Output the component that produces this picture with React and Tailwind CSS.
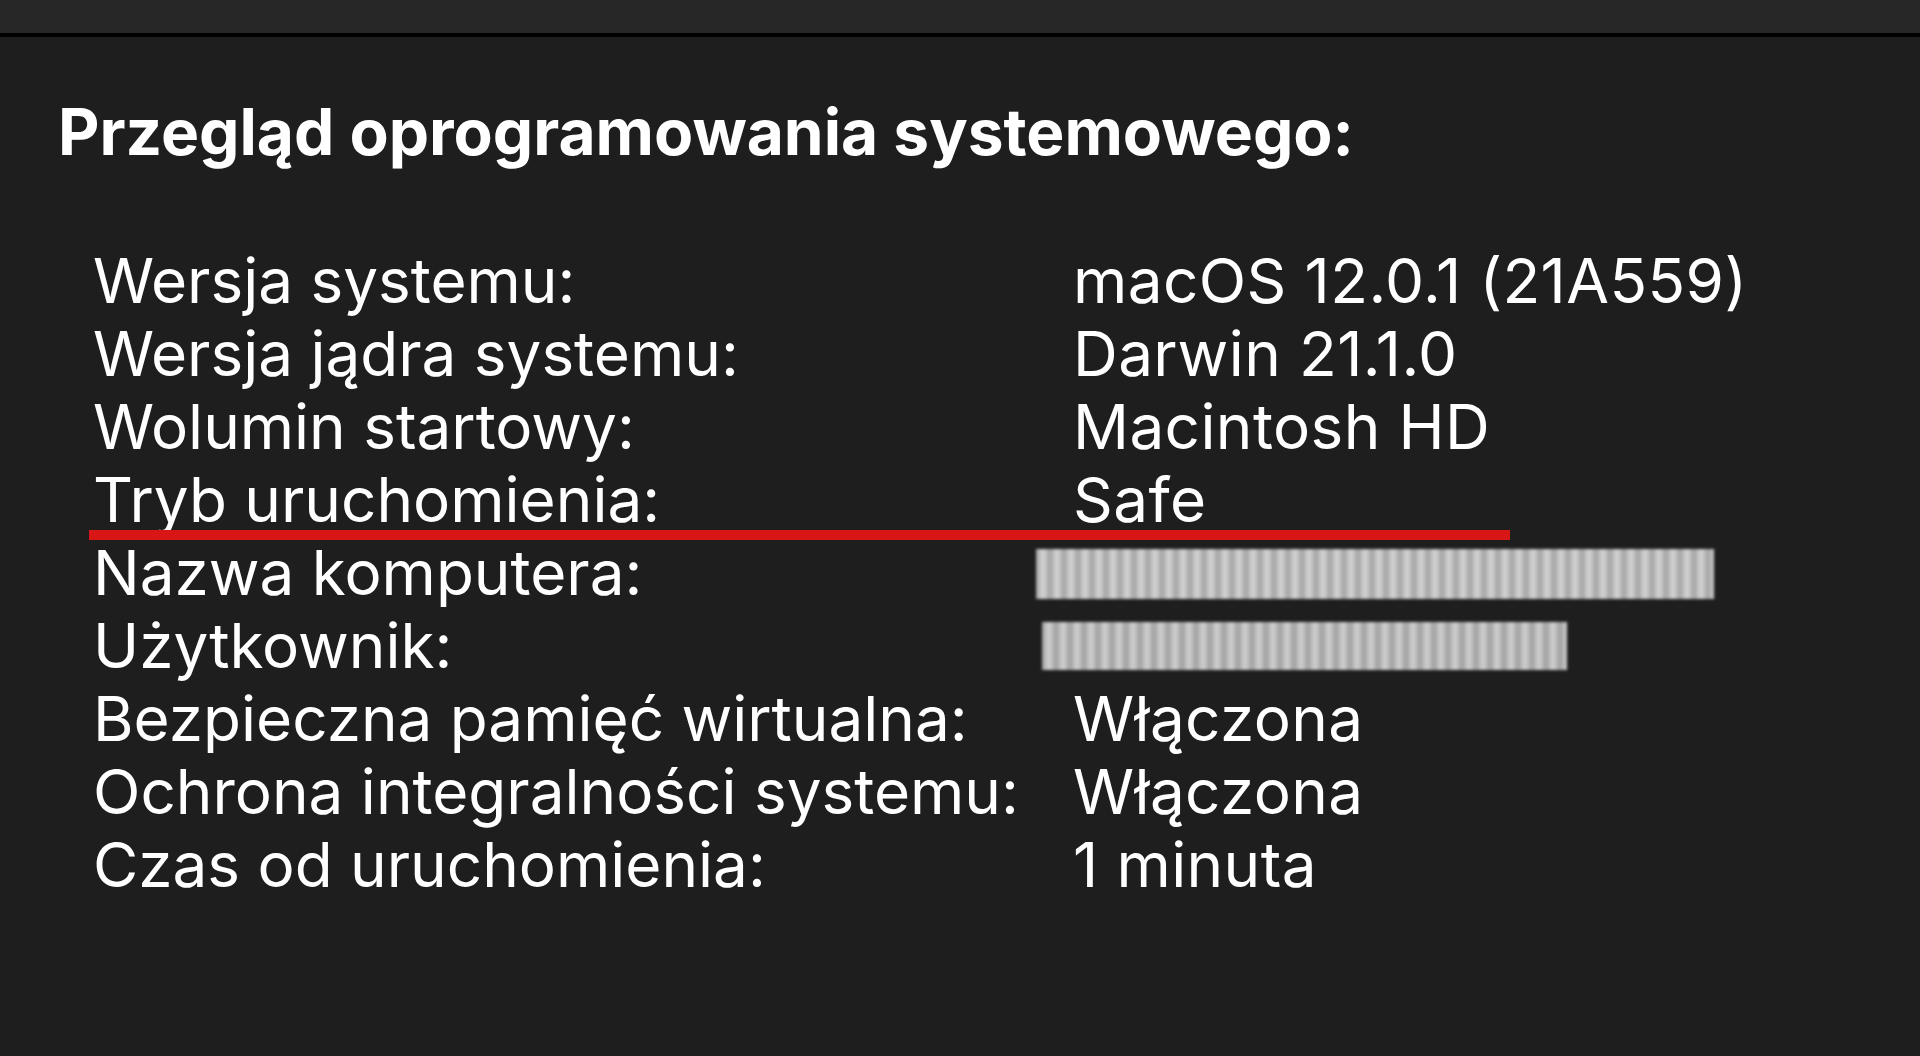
const rows = [
  { label: "Wersja systemu:", value: "macOS 12.0.1 (21A559)" },
  { label: "Wersja jądra systemu:", value: "Darwin 21.1.0" },
  { label: "Wolumin startowy:", value: "Macintosh HD" },
  { label: "Tryb uruchomienia:", value: "Safe" },
  { label: "Nazwa komputera:", blur: "wide" },
  { label: "Użytkownik:", blur: "narrow" },
  { label: "Bezpieczna pamięć wirtualna:", value: "Włączona" },
  { label: "Ochrona integralności systemu:", value: "Włączona" },
  { label: "Czas od uruchomienia:", value: "1 minuta" },
];

// smeared-out value (hidden on purpose in the screenshot)
const Smear = ({ kind }) =>
  kind === "wide" ? (
    <div className="mt-[13px] -ml-[37px] h-[50px] w-[678px] bg-[repeating-linear-gradient(90deg,#a4a4a4_0px,#d6d6d6_7px,#a4a4a4_14px)] blur-[1.5px]" />
  ) : (
    <div className="mt-[13px] -ml-[31px] h-[48px] w-[525px] bg-[repeating-linear-gradient(90deg,#a0a0a0_0px,#d2d2d2_7px,#a0a0a0_14px)] blur-[1.5px]" />
  );

export default function App() {
  return (
    <div className="min-h-screen w-full bg-[#1e1e1e] text-white font-['Inter','Liberation_Sans',sans-serif]">
      {/* window toolbar strip */}
      <div className="h-[37px] bg-[#272727] border-b-4 border-black" />

      <div className="px-[58px]">
        <h1 className="mt-[63px] text-[64px] leading-none font-bold">
          Przegląd oprogramowania systemowego:
        </h1>

        <div className="relative ml-[35px] mt-[80px]">
          {rows.map((r) => (
            <div key={r.label} className="grid grid-cols-[980px_1fr] h-[73px] text-[62px] leading-[73px]">
              <span className="whitespace-nowrap">{r.label}</span>
              {r.blur ? (
                <Smear kind={r.blur} />
              ) : (
                <span className="whitespace-nowrap tracking-[0.4px]">{r.value}</span>
              )}
            </div>
          ))}

          {/* red marker line under "Tryb uruchomienia" */}
          <div className="absolute left-[-4px] top-[286px] h-[10px] w-[1421px] bg-[#d91616] blur-[0.5px]" />
        </div>
      </div>
    </div>
  );
}
